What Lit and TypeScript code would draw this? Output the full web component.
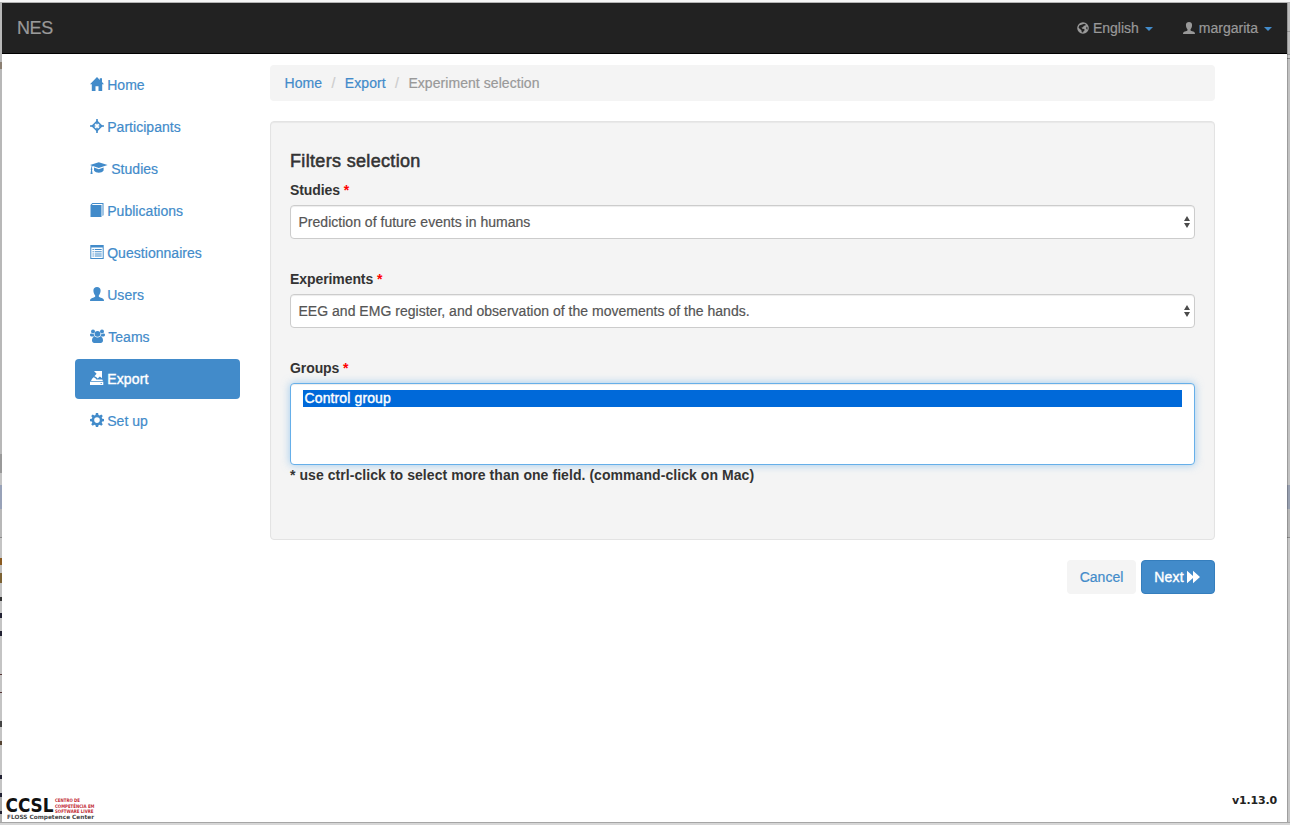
import { LitElement, html, css, svg } from "lit";
import { customElement } from "lit/decorators.js";
import { classMap } from "lit/directives/class-map.js";

const shapes: Record<string, any> = {
  home: svg`<path d="M7 0 0 7.200h1.800V14h3.700V9.300h3V14h3.700V7.200H14l-2-2.100V1.200H9.800v1.700z"/>`,
  target: svg`<path d="M6.200 0h1.600v5.300H6.200zM6.200 8.700h1.600V14H6.200zM0 6.200h5.300v1.600H0zM8.700 6.200H14v1.600H8.700z"/><path fill="none" stroke="currentColor" stroke-width="1.600" d="M7 2.300 11.700 7 7 11.700 2.300 7z"/>`,
  cap: svg`<path d="M8.800 1.300 0 4l1.900.7C1.300 5.300 1.200 6.300 1.200 7.300l-.6.900.5.8L.5 13h2.100L2 9l.5-.8-.5-.9c0-1.100.2-1.900.9-2.200l5.900 1.900L17.600 4z"/><path d="M4 6.600v3c1 1.500 2.900 2.200 4.800 2.200s3.800-.7 4.800-2.200v-3L8.800 8.200z"/>`,
  book: svg`<path d="M2.300 0H13.500v12.200l-1 .8V1H2.700L1.800 2H11.500v12H.500V2z"/>`,
  list: svg`<path fill-rule="evenodd" d="M.3 0h13.400v14H.3zM1.300 2.500V13h11.400V2.500z"/><path d="M2.500 4h1.300v1H2.500zm2.200 0h7v1h-7zM2.500 6.200h1.300v1H2.500zm2.200 0h7v1h-7zM2.500 8.400h1.300v1H2.500zm2.200 0h7v1h-7zM2.500 10.600h1.300v1H2.500zm2.200 0h7v1h-7z"/>`,
  user: svg`<path d="M7 0c2.200 0 3.600 1.400 3.600 3.500 0 2-.8 3.800-1.800 4.900v1.200c.3.700 1.600 1 3 1.500 1.300.5 2.200 1.200 2.200 2.900H0c0-1.700.9-2.400 2.200-2.900 1.400-.5 2.700-.8 3-1.500V8.400c-1-1.100-1.800-2.900-1.800-4.900C3.400 1.400 4.800 0 7 0z"/>`,
  team: svg`<circle cx="3" cy="2.400" r="2"/><circle cx="12" cy="2.400" r="2"/><circle cx="7.500" cy="4.800" r="2.900"/><path d="M1.500 4.500Q3 5.500 4 4.900q0 1.500.9 2.600H2C.4 7.500 0 6.900 0 6c0-.9.2-1.800 1.500-1.500zM13.500 4.500Q12 5.500 11 4.900q0 1.500-.9 2.600H13c1.600 0 2-.6 2-1.500 0-.9-.2-1.800-1.500-1.500zM4.800 7.500q2.700 2.100 5.400 0c2 .2 2.800 1.900 2.800 4.100 0 1.700-1 2.400-2.200 2.400H4.200C3 14 2 13.300 2 11.600c0-2.200.8-3.900 2.800-4.100z"/>`,
  exporter: svg`<path fill-rule="evenodd" d="M0 10.800h13.300V14H0zM10.500 11.900v.8h1.500v-.8z"/><path d="M4 0h8v7.300L9.900 5.400 7.600 7.600Q6.300 5.600 4.400 5.200L6.600 2.700z"/><path d="M3.500 6.200Q5.500 6.600 6.400 8.600H12.300l.6 1.300H1l.9-2z"/>`,
  cog: svg`<path fill-rule="evenodd" d="M5.900 0h2.200l.4 2 1.200.5 1.600-1.100 1.500 1.500-1.100 1.600.5 1.200 1.800.3v2.200l-1.800.3-.5 1.200 1.100 1.600-1.500 1.500-1.600-1.100-1.200.5-.4 1.800H5.900l-.4-1.800-1.200-.5-1.600 1.100-1.500-1.500 1.100-1.600-.5-1.200L0 8.200V6l1.800-.3.5-1.200-1.100-1.600 1.500-1.500 1.600 1.100L5.500 2zM7 4.300a2.800 2.800 0 1 0 0 5.600 2.800 2.800 0 0 0 0-5.600z"/>`,
  globe: svg`<path fill-rule="evenodd" d="M7 .2a6.800 6.800 0 1 0 0 13.600A6.800 6.800 0 0 0 7 .2zM8.500 1.900l1.700.9-.4 1.300-1.800.4L7 6 5.200 6.400l1 1.400 2.300.3.400 1.400-1.300 1.200-.5 1.600L5.600 12 5 9.400 3 8 1.800 6.300 2.600 4zM11 5.200l1.300 1.200-.2 2.500-1.300-.9z"/>`,
  forward: svg`<path d="M0 .7 6 6V.7L13 7 6 13.300V8L0 13.300z"/>`,
};

const icon = (name: string, w = 14, scale = 1) =>
  html`<svg class="icon" width=${w * scale} height=${14 * scale} viewBox="0 0 ${w} 14">${shapes[name]}</svg>`;

const menu = [
  { label: "Home", icon: "home", w: 14 },
  { label: "Participants", icon: "target", w: 14 },
  { label: "Studies", icon: "cap", w: 18 },
  { label: "Publications", icon: "book", w: 14 },
  { label: "Questionnaires", icon: "list", w: 14 },
  { label: "Users", icon: "user", w: 14 },
  { label: "Teams", icon: "team", w: 15 },
  { label: "Export", icon: "exporter", w: 14, active: true },
  { label: "Set up", icon: "cog", w: 14 },
];

@customElement("app-root")
export class AppRoot extends LitElement {
  static styles = css`
    :host {
      display: block;
      height: 825px;
      overflow: hidden;
      font: 14px/20px "Liberation Sans", Arial, sans-serif;
      color: #333;
      -webkit-text-stroke: .2px currentColor;
    }
    * { box-sizing: border-box; }
    a { color: #428bca; text-decoration: none; }
    .desktop {
      height: 825px;
      padding: 3px 0;
      display: grid;
      grid-template-columns: 2px 1285px 3px;
      background: linear-gradient(#f6f6f6 0 2px, #b4b4b4 2px 3px, #b9b9b9 3px 822px, #a6a6a6 822px 823px, #d6d6d6 823px);
    }
    .edge-left {
      background: linear-gradient(#b8b8b8 0 59px, #8b7f72 59px 66px, #b8b8b8 66px 451px, #999 451px 470px, #c4c4c4 470px 482px, #98a2b8 482px 506px,
        #b8b8b8 506px 534px, #8a8a8a 534px 535px, #c4c4c4 535px 555px, #8a5a20 555px 562px, #c0c0c0 562px 570px, #7c6234 570px 580px,
        #c4c4c4 580px 594px, #333 594px 598px, #c4c4c4 598px 610px, #223 610px 615px, #c4c4c4 615px 628px, #223 628px 633px,
        #c4c4c4 633px 671px, #533 671px 672px, #c4c4c4 672px 689px, #533 689px 690px, #c4c4c4 690px 718px, #444 718px 724px,
        #c4c4c4 724px 738px, #543 738px 742px, #c4c4c4 742px 772px, #223 772px 776px, #c4c4c4 776px 790px, #223 790px 794px,
        #a8a8a8 794px 808px, #223 808px 811px, #b0b0b0 811px);
    }
    .edge-right {
      background: linear-gradient(90deg, rgba(0,0,0,.2) 0 1px, transparent 1px),
        linear-gradient(#bcbcbc 0 28px, #999 28px 29px, #bcbcbc 29px 51px, #999 51px 52px, #ccc 52px 55px, #888 55px 56px, #c2c2c2 56px 482px,
        #98a0b0 482px 506px, #b8b8b8 506px 534px, #8a8a8a 534px 535px, #c6c6c6 535px);
    }
    .window { height: 819px; background: #fff; display: flex; flex-direction: column; }
    .navbar {
      height: 51px; flex: none; background: #222; border-bottom: 1px solid #000;
      display: flex; align-items: center; padding: 0 15px; color: #999;
    }
    .brand { font-size: 18px; margin-right: auto; letter-spacing: -.4px; }
    .entry { display: flex; align-items: center; }
    .entry + .entry { margin-left: 30px; }
    .entry .icon { margin-right: 4px; }
    .caret { border: 4px solid transparent; border-top-color: #428bca; border-bottom: 0; margin: 1px 0 0 6px; }
    .icon { fill: currentColor; flex: none; display: block; }
    .container { display: grid; grid-template-columns: 165px 945px; gap: 30px; padding: 11px 0 0 73px; flex: 1; align-items: start; }
    .menu { display: grid; gap: 2px; }
    .item { height: 40px; padding: 0 14.500px; display: flex; align-items: center; gap: 3.700px; border-radius: 4px; letter-spacing: .04px; }
    .item .icon { margin-top: -2px; }
    .active { background: #428bca; color: #fff; letter-spacing: .15px; -webkit-text-stroke-width: .4px; }
    .crumbs { height: 36px; padding: 8px 14.500px; background: #f4f4f4; border-radius: 4px; display: flex; margin-bottom: 20px; letter-spacing: .06px; }
    .sep { color: #ccc; padding: 0 9.400px; }
    .muted { color: #999; }
    .well { height: 419px; border: 1px solid #e3e3e3; border-radius: 4px; background: #f4f4f4; padding: 29px 19px 0; box-shadow: inset 0 1px 1px rgba(0,0,0,.05); }
    .title { font-size: 18px; line-height: 20px; margin: 0 0 9px; font-weight: 400; letter-spacing: .33px; -webkit-text-stroke: .55px #333; }
    .label { display: block; font-weight: 700; height: 20px; margin-bottom: 5px; letter-spacing: -.08px; -webkit-text-stroke-width: 0; }
    .req { color: red; }
    .select {
      height: 34px; border: 1px solid #ccc; border-radius: 4px; background: #fff; color: #555;
      box-shadow: inset 0 1px 1px rgba(0,0,0,.075); display: flex; align-items: center; justify-content: space-between;
      padding: 0 4px 0 7.500px; margin-bottom: 30px; letter-spacing: .02px;
    }
    .arrows { fill: #4b4b4b; display: block; }
    .multi { height: 82px; border: 1px solid #66afe9; border-radius: 4px; background: #fff; padding: 6px 12px; box-shadow: inset 0 1px 1px rgba(0,0,0,.075), 0 0 8px rgba(102,175,233,.6); }
    .option { height: 17px; line-height: 17px; background: #0069d9; color: #fff; padding-left: 1.500px; letter-spacing: .12px; -webkit-text-stroke: .4px #fff; }
    .note { font-weight: 700; letter-spacing: .062px; -webkit-text-stroke-width: 0; }
    .actions { display: flex; justify-content: flex-end; gap: 5px; margin-top: 20px; }
    .btn { height: 34px; border-radius: 4px; display: flex; align-items: center; justify-content: center; }
    .cancel { width: 69px; background: #f4f4f4; color: #428bca; }
    .next { width: 74px; background: #428bca; border: 1px solid #357ebd; color: #fff; gap: 3px; padding-right: 2px; letter-spacing: .2px; -webkit-text-stroke: .4px #fff; }
    .footer { display: flex; justify-content: space-between; padding: 0 10px 0 3px; height: 28px; }
    .logo { font-family: "DejaVu Sans", Verdana, sans-serif; font-weight: 700; display: block; overflow: visible; margin-top: 1px; -webkit-text-stroke-width: 0; }
    .logo-big { font-size: 19px; fill: #111; }
    .logo-red { font-size: 4.800px; fill: #c22a35; }
    .logo-sub { font-size: 5.800px; fill: #444; }
    .version { font: 700 11px/14px "DejaVu Sans", Verdana, sans-serif; letter-spacing: -.15px; color: #222; -webkit-text-stroke-width: 0; }
  `;

  render() {
    const arrows = html`<svg class="arrows" width="6" height="12" viewBox="0 0 6 12"><path d="M3 0 6 5H0zM0 7h6L3 12z"/></svg>`;
    return html`<div class="desktop"><div class="edge-left"></div><div class="window">
      <nav class="navbar">
        <span class="brand">NES</span>
        <span class="entry">${icon("globe", 14, 12 / 14)}<span>English</span><i class="caret"></i></span>
        <span class="entry">${icon("user", 14, 12 / 14)}<span>margarita</span><i class="caret"></i></span>
      </nav>
      <div class="container">
        <div class="menu">
          ${menu.map((m) => html`<a class=${classMap({ item: true, active: !!m.active })}>${icon(m.icon, m.w)}<span>${m.label}</span></a>`)}
        </div>
        <main>
          <div class="crumbs"><a>Home</a><span class="sep">/</span><a>Export</a><span class="sep">/</span><span class="muted">Experiment selection</span></div>
          <section class="well">
            <h4 class="title">Filters selection</h4>
            <label class="label">Studies <span class="req">*</span></label>
            <div class="select"><span>Prediction of future events in humans</span>${arrows}</div>
            <label class="label">Experiments <span class="req">*</span></label>
            <div class="select"><span>EEG and EMG register, and observation of the movements of the hands.</span>${arrows}</div>
            <label class="label">Groups <span class="req">*</span></label>
            <div class="multi"><div class="option">Control group</div></div>
            <div class="note">* use ctrl-click to select more than one field. (command-click on Mac)</div>
          </section>
          <div class="actions"><a class="btn cancel">Cancel</a><a class="btn next"><span>Next</span>${icon("forward", 13)}</a></div>
        </main>
      </div>
      <footer class="footer">
        <svg class="logo" width="110" height="26" viewBox="0 0 110 26">
          <text class="logo-big" x="0.500" y="17" textLength="48" lengthAdjust="spacingAndGlyphs">CCSL</text>
          <text class="logo-red" x="50" y="7.300" textLength="25" lengthAdjust="spacingAndGlyphs">CENTRO DE</text>
          <text class="logo-red" x="50" y="12.700" textLength="39.500" lengthAdjust="spacingAndGlyphs">COMPETÊNCIA EM</text>
          <text class="logo-red" x="50" y="18" textLength="38.500" lengthAdjust="spacingAndGlyphs">SOFTWARE LIVRE</text>
          <text class="logo-sub" x="2" y="23.500" textLength="87" lengthAdjust="spacingAndGlyphs">FLOSS Competence Center</text>
        </svg>
        <span class="version">v1.13.0</span>
      </footer>
    </div><div class="edge-right"></div></div>`;
  }
}
